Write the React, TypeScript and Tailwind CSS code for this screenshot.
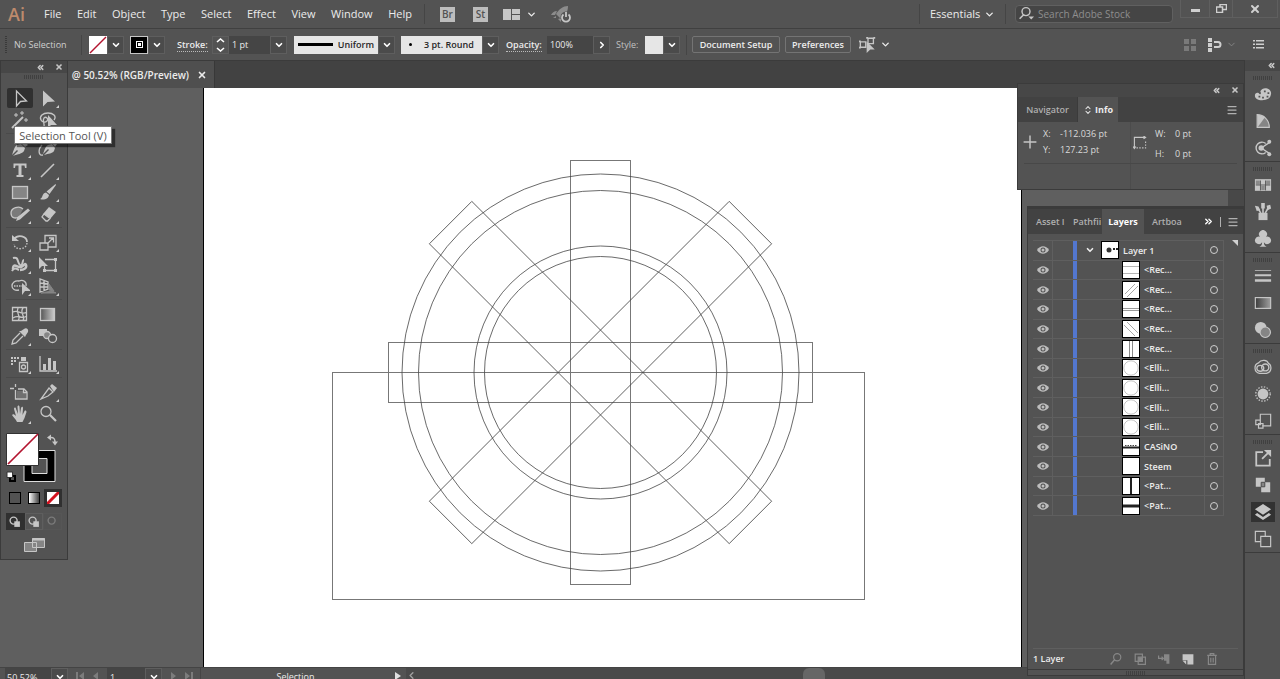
import type { ReactNode } from "react";
import { ChevronDown, ChevronRight, ChevronsLeft, ChevronsRight, ChevronsUpDown, Menu, X } from "lucide-react";

const menus = ["File", "Edit", "Object", "Type", "Select", "Effect", "View", "Window", "Help"];

type IconProps = { children: ReactNode; size?: string };

// 20x20 drawing grid shared by the tools and the dock
const Icon = ({ children, size = "size-5" }: IconProps) => (
  <svg
    viewBox="0 0 20 20"
    className={`${size} shrink-0 text-[#c6c6c6]`}
    fill="none"
    stroke="currentColor"
    strokeWidth="1.3"
    aria-hidden="true"
  >
    {children}
  </svg>
);

type Tool = { name: string; flyout?: boolean; art: ReactNode };

const solid = { fill: "currentColor", stroke: "none" };

const toolGroups: Tool[][] = [
  [
    { name: "Selection", art: <path d="M6.500 3v15l4-4.500 6-.500z" /> },
    { name: "Direct Selection", flyout: true, art: <path d="M5 2.500v16l4.500-4.500 7.500-.500z" {...solid} /> },
    {
      name: "Magic Wand",
      art: (
        <>
          <path d="M2 18 13 7" strokeWidth="2" />
          <path d="M6 3v4M4 5h4M12 1v4M10 3h4M16 8v4M14 10h4" strokeWidth="1" />
        </>
      ),
    },
    {
      name: "Lasso",
      art: (
        <>
          <path d="M16 10c3-4-1-7-6-7S1 6 3 10c1 2 4 3 6 1s-1-5-3-3 1 6 0 9" />
          <path d="M10 5v13l3-3h6z" {...solid} />
        </>
      ),
    },
  ],
  [
    {
      name: "Pen",
      flyout: true,
      art: <path fillRule="evenodd" d="M2 17c2-5 2-8 5-10l4-1 4 4-1 3c-2 3-6 3-11 5l5-5-1-1zM11 5l2-3 5 5-3 2z" {...solid} />,
    },
    {
      name: "Curvature",
      art: (
        <>
          <path d="M5 16c2-5 2-7 5-9l4-1 3 4-1 3c-2 3-5 2-10 4l5-5-1-1zM14 5l1-3 4 4-2 3z" {...solid} />
          <path d="M4 7c-4 4-4 11 1 10" />
        </>
      ),
    },
    {
      name: "Type",
      flyout: true,
      art: <path d="M3.500 3.500h13v4.500H15l-.500-2.500h-3V15h2v2h-7v-2h2V5.500h-3L5 8H3.500z" {...solid} />,
    },
    { name: "Line Segment", flyout: true, art: <path d="M3 17 16 4" strokeWidth="1.6" /> },
    {
      name: "Rectangle",
      flyout: true,
      art: <rect x="2.500" y="4.500" width="15" height="12" fill="#858585" />,
    },
    {
      name: "Paintbrush",
      flyout: true,
      art: <path d="M17.500 2 18 3l-6.500 9-3-2.500zM8 10.500l3 2.500c-1 5-6 5-9 4 3-1 2-6 6-6.500z" {...solid} />,
    },
    {
      name: "Shaper",
      flyout: true,
      art: (
        <>
          <path d="M13 5C9 1 1 4 1 9s4 6 8 4" fill="#7a7a7a" />
          <path d="m6 17 1.500-4L18 4.500l2 2-10 9z" {...solid} />
        </>
      ),
    },
    {
      name: "Eraser",
      flyout: true,
      art: (
        <>
          <path d="m11 3 7 5-5.500 6.500-7-5z" {...solid} />
          <path d="m6 10 6 4.500-2.500 2.500H8l-4-4z" />
        </>
      ),
    },
  ],
  [
    {
      name: "Rotate",
      flyout: true,
      art: (
        <>
          <path d="M4 7c4-5 13-3 13 3" strokeWidth="1.800" />
          <path d="M2 3v6h7z" {...solid} />
          <path d="M17 11c-1 8-13 7-13 1" strokeDasharray="1.500 1.500" />
        </>
      ),
    },
    {
      name: "Scale",
      flyout: true,
      art: <path d="M7 11V3.500h11V15h-8M2 11h8v7H2zM9 12l6-6M11 6h4.500v4.500" />,
    },
    {
      name: "Width",
      flyout: true,
      art: (
        <>
          <path d="M3 15c0-7 5-1 8-2s4-5 5-2-2 5-6 5" strokeWidth="2.500" />
          <path d="M3 4c6-2 4 5 7 7s2-5 4-5M2 17c2-4 5-2 7-1" strokeWidth="2" />
        </>
      ),
    },
    {
      name: "Free Transform",
      art: (
        <>
          <path d="M7 5.500h10.500v11h-11V12" />
          <path d="M1 3v12l3-3h6zM16 4h3v3h-3zM16 15h3v3h-3zM5 15h3v3H5z" {...solid} />
        </>
      ),
    },
    {
      name: "Shape Builder",
      flyout: true,
      art: (
        <>
          <path d="M9 14C5 15 2 13 2 10s3-6 7-5c4-2 8 1 7 5" />
          <path d="M4 10h8" strokeDasharray="1.500 1" />
          <path d="M12 7v12l3-4h6z" {...solid} />
        </>
      ),
    },
    {
      name: "Perspective Grid",
      flyout: true,
      art: (
        <>
          <path d="M2 3v13l8-3V6zM6 4v11M2 7l8 1M2 11h8" />
          <path d="M11 8v6l5 1zM3 17h15l-4-2z" fill="#858585" stroke="#858585" strokeWidth="1" />
        </>
      ),
    },
  ],
  [
    {
      name: "Mesh",
      art: <path d="M2.500 3.500h14v13h-14zM3 8c5-3 8 4 14 0M3 14c6-4 8 2 14-2M8 4c-3 6 4 7 0 13M13 4c-4 5 3 8 0 13" />,
    },
    {
      name: "Gradient",
      art: (
        <>
          <defs>
            <linearGradient id="toolGradient">
              <stop offset="0" stopColor="#555" />
              <stop offset="1" stopColor="#ccc" />
            </linearGradient>
          </defs>
          <rect x="2.500" y="4.500" width="14" height="12" fill="url(#toolGradient)" />
        </>
      ),
    },
    {
      name: "Eyedropper",
      flyout: true,
      art: (
        <>
          <path d="m10 7-7 7-1 4 4-1 7-7" />
          <path d="m9 5 6 6 1-2 2-3c1-3-2-5-4-3l-3 2z" {...solid} />
        </>
      ),
    },
    {
      name: "Blend",
      art: (
        <>
          <path d="M1 3h8v7H1z" {...solid} />
          <circle cx="9" cy="9" r="3.500" fill="#858585" />
          <circle cx="14.500" cy="12.500" r="4" fill="#535353" />
        </>
      ),
    },
  ],
  [
    {
      name: "Symbol Sprayer",
      flyout: true,
      art: (
        <>
          <path d="M9.500 8.500h8v9h-8z" />
          <circle cx="13.500" cy="13" r="2" />
          <path d="M11 3h5v4h-5zM1 3h2v2H1zM4 3h2v2H4zM7 3h2v2H7zM1 6h2v2H1zM4 6h2v2H4zM1 9h2v2H1z" {...solid} />
        </>
      ),
    },
    {
      name: "Column Graph",
      flyout: true,
      art: (
        <>
          <path d="M2 2v15h17" />
          <path d="M5 10h3v6H5zM10 4h3v12h-3zM15 7h3v9h-3z" {...solid} />
        </>
      ),
    },
  ],
  [
    {
      name: "Artboard",
      art: (
        <>
          <path d="M5.500 2v3M5.500 8v9H17v-7l-3-3H8M0 6.500h4" />
          <path d="M7 9h6v2h3v5H7z" fill="#707070" stroke="none" />
          <path d="M13.500 7v3.500H17" />
        </>
      ),
    },
    {
      name: "Slice",
      flyout: true,
      art: (
        <>
          <path d="m11 6 4 4-5 4-7 3z" />
          <path d="m12 4 2-2 5 4-3 4z" {...solid} />
        </>
      ),
    },
    {
      name: "Hand",
      flyout: true,
      art: (
        <path
          d="M7 18c-1-3-4-5-5-7 1-1 2-1 4 1L4 5c0-2 2-2 2 0l2 5-.500-7c0-2 2-2 2 0l.500 7 1-6c1-2 2-1 2 0l-.500 7 2-4c1-1 2 0 2 1l-2 6-2 4z"
          {...solid}
        />
      ),
    },
    {
      name: "Zoom",
      art: (
        <>
          <circle cx="8" cy="7.500" r="5" />
          <path d="m12 11 6 6" strokeWidth="2.200" />
        </>
      ),
    },
  ],
];

const dockGroups: Tool[][] = [
  [
    {
      name: "Color",
      art: (
        <path
          fillRule="evenodd"
          d="M1 12c0-4 4-4 5-2 2 1 2-1 1-3 3-6 12-3 12 2 0 6-5 8-10 8S1 15 1 12zm10-6v2h2V6zm4 2v2h2V8zm-1 4v2h2v-2zm-5 1v2h2v-2zm-4-1v2h2v-2z"
          {...solid}
        />
      ),
    },
    {
      name: "Color Guide",
      art: (
        <>
          <path d="M3.500 3v14H17C17 9 11 3 3.500 3z" fill="#858585" />
          <path d="M4 3v14L12 6C9 4 7 3 4 3z" {...solid} />
        </>
      ),
    },
    {
      name: "Color Themes",
      art: (
        <>
          <path d="M13 5a6.500 6.500 0 1 0 0 10M8 10l9-6M8 10l9 6" strokeWidth="1.600" />
          <circle cx="8" cy="10" r="3" {...solid} />
          <circle cx="17" cy="3" r="2.200" {...solid} />
          <circle cx="17" cy="17" r="2.200" {...solid} />
        </>
      ),
    },
  ],
  [
    {
      name: "Swatches",
      art: (
        <>
          <path d="M1 3.500h18v13H1z" {...solid} />
          <path d="M2 5h4.500v4.500H2zM13.500 5H18v4.500h-4.500zM8 11h4v4.500H8z" fill="#8a8a8a" stroke="none" />
          <path d="M2 10h16M7.200 5v11M12.800 5v11" stroke="#535353" strokeWidth="1" />
        </>
      ),
    },
    {
      name: "Brushes",
      art: (
        <>
          <path d="M5 11h10v8H5z" {...solid} />
          <path d="M8 12 4.500 6M10 11V4M12 12l4-7" strokeWidth="1.800" />
          <path d="M1 3l4 1 2 4-4 1zM8 0h4v6H8zM14 3l4-1 1 4-4 2z" {...solid} />
        </>
      ),
    },
    {
      name: "Symbols",
      art: (
        <path
          d="M6.500 7.500a4.500 4.500 0 1 1 7 0 4.200 4.200 0 1 1-2.500 6c0 3 1 4 3 5H6c2-1 3-2 3-5a4.200 4.200 0 1 1-2.500-6z"
          {...solid}
        />
      ),
    },
  ],
  [
    { name: "Stroke", art: <path d="M1 3.500h18v1H1zM1 8h18v2.200H1zM1 13.500h18v3H1z" {...solid} /> },
    {
      name: "Gradient Panel",
      art: (
        <>
          <defs>
            <linearGradient id="dockGradient">
              <stop offset="0" stopColor="#3c3c3c" />
              <stop offset="1" stopColor="#a0a0a0" />
            </linearGradient>
          </defs>
          <rect x="1.500" y="4" width="17" height="12" fill="url(#dockGradient)" />
        </>
      ),
    },
    {
      name: "Transparency",
      art: (
        <>
          <circle cx="7.500" cy="7.500" r="6.500" {...solid} />
          <circle cx="12.500" cy="12.500" r="5.800" fill="#858585" />
        </>
      ),
    },
  ],
  [
    {
      name: "Libraries",
      art: (
        <>
          <path d="M6 17a6 6 0 0 1-1-11.500C8 1 15 2 16 6c4 2 4 10-2 11z" strokeWidth="1.400" />
          <ellipse cx="7" cy="11.500" rx="3.800" ry="3.300" strokeWidth="1.600" />
          <ellipse cx="12.500" cy="10.500" rx="4" ry="3.800" strokeWidth="1.600" />
        </>
      ),
    },
    {
      name: "Appearance",
      art: (
        <>
          <circle cx="10" cy="10" r="6" {...solid} />
          <circle cx="10" cy="10" r="8" strokeDasharray="1.600 1.600" strokeWidth="1.500" />
        </>
      ),
    },
    {
      name: "Graphic Styles",
      art: <path d="M7 9V2.500h11.500v13H9M2 9h5v5H2zM5 13h5v5H5z" />,
    },
  ],
  [
    {
      name: "Asset Export",
      art: (
        <>
          <path d="M10 3.500H2.500v15h15V11M9 11l7-7" strokeWidth="2" />
          <path d="M11 1h8v8z" {...solid} />
        </>
      ),
    },
    {
      name: "Pathfinder",
      art: (
        <>
          <path d="M2 2h10v5h6v11H8v-6H2z" {...solid} />
          <path d="M8 7h4v5H8z" fill="#858585" stroke="#444" strokeWidth="1" />
        </>
      ),
    },
    {
      name: "Layers",
      art: (
        <path d="m10 1 9 6-9 6-9-6zM3.500 11l6.500 4.500 6.500-4.500L19 13l-9 6-9-6z" {...solid} />
      ),
    },
    { name: "Artboards", art: <path d="M7 13H1.500V1.500h11V7M7.500 7h11v11.500h-11z" /> },
  ],
];

type Layer = { name: string; art: ReactNode };

const ellipse = <circle cx="8" cy="8" r="7.200" stroke="#c4c4c4" />;
const layers: Layer[] = [
  { name: "<Rec...", art: <path d="M0 4.500h16M0 11.500h16" stroke="#b5b5b5" /> },
  { name: "<Rec...", art: <path d="M2 12 12 2M4 15 15 4" stroke="#a8a8a8" /> },
  { name: "<Rec...", art: <path d="M0 7.500h16M0 9.500h16" stroke="#9a9a9a" /> },
  { name: "<Rec...", art: <path d="M1 4l11 11M4 1l11 11" stroke="#a8a8a8" /> },
  { name: "<Rec...", art: <path d="M6.500 0v16M9.500 0v16" stroke="#8a8a8a" /> },
  { name: "<Elli...", art: ellipse },
  { name: "<Elli...", art: ellipse },
  { name: "<Elli...", art: ellipse },
  { name: "<Elli...", art: ellipse },
  {
    name: "CASiNO",
    art: (
      <>
        <path d="M0 8.500h16" stroke="#222" strokeWidth="2" />
        <path d="M2 6.500h12" stroke="#444" strokeDasharray="1.500 1" />
      </>
    ),
  },
  { name: "Steem", art: null },
  { name: "<Pat...", art: <path d="M8 0v16" stroke="#222" strokeWidth="2" /> },
  { name: "<Pat...", art: <path d="M0 8h16" stroke="#222" strokeWidth="3" /> },
];

const Gripper = () => (
  <span className="block h-1 w-5 bg-[repeating-linear-gradient(90deg,#404040_0_1px,transparent_1px_2px)]" />
);

const Arrow = ({ label, right = false }: { label: string; right?: boolean }) => (
  <button
    aria-label={label}
    className="flex h-[18px] w-[17px] shrink-0 items-center justify-center border border-[#5e5e5e] bg-[#4b4b4b] text-white"
  >
    {right ? <ChevronRight size={10} strokeWidth={4} /> : <ChevronDown size={10} strokeWidth={4} />}
  </button>
);

const Divider = () => <span className="h-5 w-px shrink-0 bg-[#454545]" />;

const MenuBar = () => (
  <header className="flex h-7 shrink-0 items-center text-[11px]">
    <span className="w-[44px] pl-2 text-[18px] leading-none font-semibold text-[#bd8a6c]">Ai</span>
    <nav className="flex w-[368px] justify-between">
      {menus.map((menu) => (
        <button key={menu}>{menu}</button>
      ))}
    </nav>
    <div className="ml-3 flex items-center">
      <Divider />
      <button className="ml-[15px] size-[15px] bg-[#bdbdbd] text-[10px] leading-none font-semibold text-[#535353]">Br</button>
      <button className="ml-[18px] size-[15px] bg-[#bdbdbd] text-[10px] leading-none font-semibold text-[#535353]">St</button>
      <button aria-label="Arrange documents" className="ml-[15px] flex items-center gap-1.5">
        <svg viewBox="0 0 17 11" className="h-[11px] w-[17px]" fill="#c6c6c6">
          <path d="M0 0h8v11H0zM9 0h8v5H9zM9 6h8v5H9z" />
        </svg>
        <ChevronDown size={11} strokeWidth={3} />
      </button>
      <button aria-label="GPU performance" className="ml-3.5">
        <svg viewBox="0 0 22 18" className="h-[18px] w-[22px]" fill="#8c8c8c">
          <path d="M17 1c-5 0-9 3-12 8l5 5c4-2 7-7 7-13zM6 6C3 6 1 8 0 10h4zM7 14l3-1v4zM2 13l3-2v2z" />
          <circle cx="15" cy="12" r="5.500" fill="#535353" />
          <path d="M12.500 9.500a4 4 0 1 0 5 0M15 7v5" fill="none" stroke="#c6c6c6" strokeWidth="1.800" />
        </svg>
      </button>
    </div>
    <div className="ml-auto flex h-full items-center">
      <Divider />
      <label className="ml-2.5 flex items-center">
        <select aria-label="Workspace" className="w-[54px] appearance-none outline-none">
          <option>Essentials</option>
        </select>
        <ChevronDown size={11} strokeWidth={3} />
      </label>
      <span className="ml-2.5" />
      <Divider />
      <label className="ml-[9px] flex h-[18px] w-[158px] items-center rounded-sm border border-[#606060] bg-[#454545] px-0.5">
        <Icon size="size-4">
          <circle cx="10" cy="7" r="5" strokeWidth="1.800" />
          <path d="m7 11-5 5" strokeWidth="2" />
          <path d="M13 13h7l-3.500 4z" {...solid} />
        </Icon>
        <input
          aria-label="Search Adobe Stock"
          placeholder="Search Adobe Stock"
          className="ml-1 w-full min-w-0 text-[10px] outline-none placeholder:text-[#8e8e8e]"
        />
      </label>
      <div className="mr-0.5 ml-[7px] flex h-[18px] self-start border border-t-0 border-[#5f5f5f]">
        <button aria-label="Minimize" className="flex w-7 items-center justify-center pt-1">
          <span className="h-[3px] w-[9px] bg-[#cfcfcf]" />
        </button>
        <button aria-label="Restore" className="flex w-6 items-center justify-center border-x border-[#5f5f5f]">
          <svg viewBox="0 0 11 9" className="h-[9px] w-[11px]" fill="none" stroke="#cfcfcf">
            <path d="M4 3V.500h6.500v5H7M.500 3h6v5.500h-6z" strokeWidth="1.500" />
          </svg>
        </button>
        <button aria-label="Close" className="flex w-11 items-center justify-center text-[#d0d0d0]">
          <X size={12} strokeWidth={4} />
        </button>
      </div>
    </div>
  </header>
);

const ControlBar = () => (
  <div className="flex h-8 shrink-0 items-center border-t border-[#404040] text-[9px] font-medium whitespace-nowrap">
    <span className="ml-[5px] h-[18px] w-0.5 bg-[repeating-linear-gradient(#3a3a3a_0_1px,transparent_1px_2px)]" />
    <span className="ml-[7px] w-[67px] text-[#cfcfcf]">No Selection</span>
    <Divider />
    <button aria-label="Fill" className="ml-[7px] size-[18px] bg-white">
      <svg viewBox="0 0 18 18" stroke="#b3142f" strokeWidth="1.500">
        <path d="M1 17 17 1" />
      </svg>
    </button>
    <Arrow label="Fill options" />
    <button aria-label="Stroke color" className="ml-1.5 flex size-[18px] items-center justify-center border border-[#c6c6c6] bg-black">
      <span className="flex size-[7px] items-center justify-center border border-white bg-black">
        <span className="size-[3px] bg-white" />
      </span>
    </button>
    <Arrow label="Stroke color options" />
    <label htmlFor="strokeWeight" className="ml-3 w-[35px] font-semibold">
      <span className="border-b border-dotted border-[#bbb]">Stroke:</span>
    </label>
    <button aria-label="Step stroke weight" className="flex h-[18px] w-[17px] items-center justify-center border border-[#5e5e5e]">
      <svg viewBox="0 0 9 14" className="h-3.5 w-[9px]" fill="none" stroke="#fff" strokeWidth="1.600">
        <path d="m1 4 3.500-3L8 4M1 10l3.500 3L8 10" />
      </svg>
    </button>
    <input id="strokeWeight" defaultValue="1 pt" className="h-[18px] w-[41px] bg-[#454545] px-[3px] outline-none" />
    <Arrow label="Stroke weight presets" />
    <button className="ml-[7px] flex h-[18px] w-[84px] items-center gap-[5px] bg-[#e6e6e6] px-1 font-semibold text-[#262626]">
      <span className="h-[3px] w-[37px] bg-black" />
      Uniform
    </button>
    <Arrow label="Width profile" />
    <button className="ml-[6px] flex h-[18px] w-[81px] items-center gap-3 bg-[#e6e6e6] px-2 font-semibold text-[#262626]">
      <span className="size-[3px] rounded-full bg-black" />
      3 pt. Round
    </button>
    <Arrow label="Brush definition" />
    <label htmlFor="opacity" className="ml-[7px] w-[41px] font-semibold">
      <span className="border-b border-dotted border-[#bbb]">Opacity:</span>
    </label>
    <input id="opacity" defaultValue="100%" className="h-[18px] w-[46px] bg-[#454545] px-[3px] outline-none" />
    <Arrow label="Opacity slider" right />
    <span className="ml-[6px] w-[29px] text-[#c2c2c2]">Style:</span>
    <button aria-label="Graphic style" className="size-[18px] bg-[#e6e6e6]" />
    <Arrow label="Graphic style options" />
    <span className="ml-1.5" />
    <Divider />
    <button className="ml-[5px] h-[17px] w-[88px] rounded-xs border border-[#747474] leading-none font-semibold">Document Setup</button>
    <button className="ml-[5px] h-[17px] w-[66px] rounded-xs border border-[#747474] leading-none font-semibold">Preferences</button>
    <button aria-label="Select similar objects" className="ml-2 flex items-center gap-[3px]">
      <Icon size="size-[18px]">
        <path d="M1.500 6.500h6v6h-6zM10 2.500h6v6h-6z" strokeWidth="1.500" />
        <path d="M0 5h2v2H0zM8 1h2v2H8zM16 1h2v2h-2zM0 12h2v2H0z" {...solid} />
        <path d="M8.500 6v13l4-4h5z" {...solid} />
      </Icon>
      <ChevronDown size={11} strokeWidth={3} />
    </button>
    <div className="mr-4 ml-auto flex items-center">
      <button aria-label="Align to pixel grid">
        <svg viewBox="0 0 12 12" className="size-3" fill="#7a7a7a">
          <path d="M0 0h5v5H0zM7 0h5v5H7zM0 7h5v5H0zM7 7h5v5H7z" />
        </svg>
      </button>
      <button aria-label="Snap options" className="ml-3 flex items-center gap-1">
        <svg viewBox="0 0 14 14" className="size-3.5" fill="#cfcfcf">
          <path d="M0 0h4v4H0zM0 5h4v4H0zM0 10h4v4H0z" />
          <path d="M6 4h4a2.500 2.500 0 0 1 0 5H6" fill="none" stroke="#cfcfcf" strokeWidth="2" />
        </svg>
        <ChevronDown size={11} strokeWidth={2} className="text-[#858585]" />
      </button>
      <button aria-label="Control bar menu" className="ml-4">
        <svg viewBox="0 0 11 9" className="h-[9px] w-[11px]" fill="#cfcfcf">
          <path d="M0 0h2v1.500H0zM3 0h8v1.500H3zM0 3.500h2V5H0zM3 3.500h8V5H3zM0 7h2v1.500H0zM3 7h8v1.500H3z" />
        </svg>
      </button>
    </div>
  </div>
);

// pair of solid triangles used to collapse a panel
const Collapse = ({ label }: { label: string }) => (
  <button aria-label={label}>
    <ChevronsLeft size={9} strokeWidth={4} className="text-[#c6c6c6]" />
  </button>
);

const WindowBar = () => (
  <div className="flex h-3 shrink-0 items-center justify-end gap-2.5 bg-[#474747] px-1 text-[#c6c6c6]">
    <Collapse label="Collapse panel" />
    <button aria-label="Close panel"><X size={8} strokeWidth={5} /></button>
  </div>
);

const Toolbox = () => (
  <aside className="absolute top-0 left-0 z-10 w-[68px] border border-[#3b3b3b] bg-[#535353] pb-1.5">
    <WindowBar />
    <div className="flex h-3.5 items-start justify-center pt-0.5"><Gripper /></div>
    {toolGroups.map((group, g) => (
      <div key={g} className={g ? "mx-[5px] mt-0.5 border-t border-[#4a4a4a] pt-[3px]" : "mx-[5px]"}>
        <div className="grid grid-cols-2">
          {group.map((tool, i) => (
            <button
              key={tool.name}
              aria-label={tool.name}
              className={
                g === 0 && i === 0
                  ? "relative mx-px my-px flex h-5 items-center justify-center rounded-xs bg-[#303030]"
                  : "relative mx-px my-px flex h-5 items-center justify-center"
              }
            >
              <Icon>{tool.art}</Icon>
              {tool.flyout && (
                <span className="absolute right-0.5 bottom-0 border-b-3 border-l-3 border-b-[#d0d0d0] border-l-transparent" />
              )}
            </button>
          ))}
        </div>
      </div>
    ))}
    <div className="flex justify-center pt-[7px]">
      <svg viewBox="1 0 56 52" className="h-[52px] w-14" role="img" aria-label="Fill and stroke">
        <path d="M19 18.500h31v31H19z" fill="#000" stroke="#ddd" />
        <path d="M27 26.500h15v15H27z" fill="#535353" stroke="#ddd" />
        <path d="M1.500 1.500h32v32h-32z" fill="#fff" stroke="#333" />
        <path d="m3 32 30-30" stroke="#b3142f" strokeWidth="1.700" />
        <path d="M46 5.500c3 0 4 1 4 5" fill="none" stroke="#c6c6c6" strokeWidth="1.500" />
        <path d="m42 5.500 4-3v6zM47 9.500h6l-3 4z" fill="#c6c6c6" />
        <path d="M5 44h5v5H5z" fill="none" stroke="#000" strokeWidth="2" />
        <path d="M2 40h5.500v5.500H2z" fill="#fff" stroke="#333" />
      </svg>
    </div>
    <div className="mx-[5px] mt-[5px] grid grid-cols-3 justify-items-center">
      <button aria-label="Color" className="my-[3px] size-3 border border-black bg-[#535353]" />
      <button aria-label="Gradient" className="my-[3px] size-3 border border-black bg-linear-to-r from-white to-[#444]" />
      <button aria-label="None" className="flex size-[18px] items-center justify-center bg-[#303030]">
        <svg viewBox="0 0 12 12" className="size-3 bg-white" stroke="#d3121f" strokeWidth="3">
          <path d="M0 12 12 0" />
        </svg>
      </button>
    </div>
    <div className="mx-[5px] mt-1.5 grid grid-cols-3">
      {["Draw Normal", "Draw Behind", "Draw Inside"].map((mode, i) => (
        <button
          key={mode}
          aria-label={mode}
          className={
            i === 0
              ? "flex h-[17px] items-center justify-center bg-[#303030]"
              : i === 1
                ? "flex h-[17px] items-center justify-center border border-[#5e5e5e]"
                : "flex h-[17px] items-center justify-center border border-[#5e5e5e] opacity-35"
          }
        >
          <Icon size="size-3.5">
            <circle cx="8" cy="8" r="5" strokeWidth="2" />
            {i < 2 && <path d="M9 9h8v8H9z" {...solid} />}
          </Icon>
        </button>
      ))}
    </div>
    <button aria-label="Change screen mode" className="mx-auto mt-[7px] block">
      <svg viewBox="0 0 21 16" className="h-4 w-[21px]" fill="#858585" stroke="#c6c6c6">
        <path d="M.500 5.500h12v9H.500zM8.500 1.500h12v9h-12z" />
        <path d="M8 2.500h13" strokeWidth="2" />
      </svg>
    </button>
  </aside>
);

const Artwork = () => (
  <svg viewBox="204 88 817 579" className="h-[579px] w-[817px]" fill="none" stroke="#777" role="img" aria-label="Artboard">
    <rect x="332.500" y="372.500" width="532" height="227" />
    <rect x="570.500" y="160.500" width="60" height="424" />
    <rect x="388.500" y="342.500" width="424" height="60" />
    <g stroke="#444" strokeWidth=".8">
      <rect x="388.500" y="342.500" width="424" height="60" transform="rotate(45 600.500 372.500)" />
      <rect x="388.500" y="342.500" width="424" height="60" transform="rotate(-45 600.500 372.500)" />
      {[198.500, 182, 126.500, 116].map((r) => (
        <circle key={r} cx="600.500" cy="372.500" r={r} />
      ))}
    </g>
  </svg>
);

const StepIcon = ({ d }: { d: string }) => (
  <svg viewBox="0 0 8 8" className="size-2" fill="#7c7c7c">
    <path d={d} />
  </svg>
);

const StatusBar = () => (
  <footer className="flex h-3 shrink-0 items-start overflow-hidden border-t border-[#444] text-[9px] font-medium">
    <input aria-label="Zoom level" defaultValue="50.52%" className="ml-[5px] h-[18px] w-[46px] bg-[#454545] px-0.5 outline-none" />
    <Arrow label="Zoom presets" />
    <div className="flex h-[16px] w-[39px] items-center justify-center gap-2">
      <button aria-label="First artboard"><StepIcon d="M0 0h2v8H0zM8 0v8L3 4z" /></button>
      <button aria-label="Previous artboard"><StepIcon d="M6 0v8L1 4z" /></button>
    </div>
    <input aria-label="Artboard number" defaultValue="1" className="h-[18px] w-[38px] bg-[#454545] px-[3px] outline-none" />
    <Arrow label="Artboard list" />
    <div className="flex h-[16px] w-[38px] items-center justify-center gap-2">
      <button aria-label="Next artboard"><StepIcon d="M2 0v8l5-4z" /></button>
      <button aria-label="Last artboard"><StepIcon d="M6 0h2v8H6zM0 0v8l5-4z" /></button>
    </div>
    <span className="flex h-[18px] w-[190px] items-center justify-center border-l border-[#454545]">Selection</span>
    <button aria-label="Status options" className="flex h-4 w-4 items-center justify-center">
      <svg viewBox="0 0 6 8" className="h-2 w-1.5" fill="#e0e0e0"><path d="M0 0v8l6-4z" /></svg>
    </button>
    <div className="flex h-[18px] flex-1 items-start bg-[#4a4a4a]">
      <ChevronDown size={11} strokeWidth={3} className="mt-0.5 rotate-90 text-[#a0a0a0]" />
      <span className="ml-auto h-[18px] w-[22px] rounded-md bg-[#666]" />
      <span className="w-1/2" />
    </div>
  </footer>
);

const Dock = () => (
  <aside className="w-9 shrink-0 border-l border-[#3b3b3b]">
    <div className="flex h-[11px] items-center justify-end bg-[#474747] pr-1">
      <Collapse label="Expand panels" />
    </div>
    {dockGroups.map((group, g) => (
      <div key={g} className="border-b border-[#3b3b3b]">
        <div className="flex h-[9px] items-end justify-center"><Gripper /></div>
        {group.map((panel) => (
          <button
            key={panel.name}
            aria-label={panel.name}
            className="flex h-[27px] w-full items-center justify-center"
          >
            <span
              className={
                panel.name === "Layers"
                  ? "flex h-5 w-6 items-center justify-center bg-[#323232]"
                  : "flex h-5 w-6 items-center justify-center"
              }
            >
              <Icon size="size-[18px]">{panel.art}</Icon>
            </span>
          </button>
        ))}
      </div>
    ))}
  </aside>
);

const InfoPanel = () => (
  <section className="absolute top-[23px] right-9 w-[227px] border border-[#3b3b3b] bg-[#535353] text-[9px] font-medium">
    <div className="h-[13px] bg-[#474747]">
      <WindowBar />
    </div>
    <div className="flex h-[25px] items-stretch bg-[#424242]">
      <button className="w-[60px] border-r border-[#3b3b3b] font-semibold text-[#b0b0b0]">Navigator</button>
      <button className="flex w-10 items-center justify-center gap-0.5 bg-[#535353] font-bold">
        <ChevronsUpDown size={10} strokeWidth={2.5} />
        Info
      </button>
      <button aria-label="Info menu" className="mr-[5px] ml-auto"><Menu size={12} strokeWidth={2.5} className="text-[#b0b0b0]" /></button>
    </div>
    <div className="flex h-[41px] text-[#dadada]">
      <div className="flex w-[113px] items-start gap-[5px] border-r border-[#4c4c4c] pl-1">
        <span className="pt-3"><Icon size="size-4"><path d="M10 2v16M2 10h16" strokeWidth="1.800" /></Icon></span>
        <dl className="grid grid-cols-[17px_auto] pt-1 leading-4">
          <dt>X:</dt><dd>-112.036 pt</dd>
          <dt>Y:</dt><dd>127.23 pt</dd>
        </dl>
      </div>
      <div className="flex items-start gap-2 pl-0.5">
        <span className="pt-3.5">
          <Icon size="size-3.5">
            <path d="M2 18V2h15M0 15l2 3 2-3M15 0l3 2-3 2" strokeWidth="1.600" />
            <path d="M5 17h13V6" strokeDasharray="2 2" strokeWidth="1.600" />
          </Icon>
        </span>
        <dl className="grid grid-cols-[20px_auto] pt-0.5 leading-5">
          <dt>W:</dt><dd>0 pt</dd>
          <dt>H:</dt><dd>0 pt</dd>
        </dl>
      </div>
    </div>
    <div className="mx-1.5 h-[26px] border-t border-[#484848]">
      <div className="h-full w-[107px] border-r border-[#4c4c4c]" />
    </div>
  </section>
);

const Eye = () => (
  <svg viewBox="0 0 12 8" className="h-2 w-3" fill="#bdbdbd">
    <path d="M0 4c3-5 9-5 12 0-3 5-9 5-12 0z" />
    <circle cx="6" cy="4" r="2.500" fill="#535353" />
    <circle cx="6" cy="4" r="1.500" />
  </svg>
);

const LayerRow = ({ name, art, parent = false }: Layer & { parent?: boolean }) => (
  <li className="flex flex-1 items-stretch border-b border-[#5f5f5f]">
    <button aria-label={`Toggle ${name}`} className="flex w-5 items-center justify-center border-r border-[#5f5f5f]"><Eye /></button>
    <span className="w-5" />
    <span className="w-1 bg-[#5377cf]" />
    <span className={parent ? "flex w-[25px] items-center justify-center" : "w-[46px]"}>
      {parent && <ChevronDown size={10} strokeWidth={4} />}
    </span>
    <svg viewBox="0 0 16 16" className="size-4 self-center bg-white outline outline-black" fill="none">{art}</svg>
    <span className="min-w-0 flex-1 self-center pl-[5px] whitespace-nowrap">{name}</span>
    <button aria-label={`Target ${name}`} className="flex w-5 items-center justify-center border-x border-[#5f5f5f]">
      <span className="size-2 rounded-full border border-[#cfcfcf]" />
    </button>
  </li>
);

const LayersPanel = () => (
  <section className="absolute top-[146px] right-9 flex w-[217px] flex-col border border-t-3 border-[#3b3b3b] bg-[#535353] text-[9px] font-semibold">
    <div className="flex h-[25px] items-stretch bg-[#424242] whitespace-nowrap text-[#b0b0b0]">
      <button className="ml-2 w-7 text-left">Asset I</button>
      <button className="ml-[9px] w-[29px] text-left">Pathfii</button>
      <button className="w-[42px] bg-[#535353] font-bold text-white">Layers</button>
      <button className="ml-2 w-8 text-left">Artboa</button>
      <button aria-label="More panels" className="ml-auto text-white"><ChevronsRight size={11} strokeWidth={3} /></button>
      <span className="mx-1.5 h-2.5 w-px self-center bg-[#b0b0b0]" />
      <button aria-label="Layers menu" className="mr-1"><Menu size={12} strokeWidth={2.5} /></button>
    </div>
    <div className="mx-[5px] mt-1.5 flex h-[409px] justify-between border-b border-[#5f5f5f]">
      <ul className="flex h-[276px] w-[191px] flex-col border-t border-[#5f5f5f] text-[9px]">
        <LayerRow
          parent
          name="Layer 1"
          art={
            <>
              <circle cx="7" cy="8" r="2.500" fill="#333" />
              <path d="M11 7h2M14 7h2" stroke="#222" strokeWidth="2" />
            </>
          }
        />
        {layers.map((layer, i) => (
          <LayerRow key={i} {...layer} />
        ))}
      </ul>
      <span className="self-start border-t-6 border-l-6 border-t-[#d0d0d0] border-l-transparent" />
    </div>
    <div className="flex h-5 items-center pr-[25px] pl-[5px]">
      <span className="flex-1">1 Layer</span>
      <div className="flex gap-3">
        <button aria-label="Locate object" className="opacity-45"><Icon size="size-3"><circle cx="12" cy="7" r="6" strokeWidth="2" /><path d="m8 11-7 8" strokeWidth="2.500" /></Icon></button>
        <button aria-label="Make clipping mask" className="opacity-45"><Icon size="size-3"><path d="M2 2h12v12H2zM7 7h12v12H7z" strokeWidth="2" /><path d="M7 7h7v7H7z" {...solid} /></Icon></button>
        <button aria-label="Create sublayer" className="opacity-45"><Icon size="size-3"><path d="M1 4v5h8M6 6l3 3-3 3" strokeWidth="2" /><path d="M10 2h9v16h-5v-5h-4z" {...solid} /></Icon></button>
        <button aria-label="Create layer"><Icon size="size-3"><path d="M1 2h18v17H9v-7H1zM1 13h6v6z" {...solid} /></Icon></button>
        <button aria-label="Delete" className="opacity-45"><Icon size="size-3"><path d="M2 4h16M7 4V1h6v3M4 5v14h12V5M8 8v8M12 8v8" strokeWidth="2" /></Icon></button>
      </div>
    </div>
    <div className="flex h-1.5 items-center justify-center border-t border-[#3b3b3b]"><Gripper /></div>
  </section>
);

const App = () => {
  return (
    <div className="flex h-screen flex-col overflow-hidden bg-[#535353] font-['Open_Sans','Noto_Sans',sans-serif] text-[#ececec]">
      <MenuBar />
      <ControlBar />
      <div className="relative flex min-h-0 flex-1">
        <main className="flex min-w-0 flex-1 flex-col">
          <div className="flex h-7 shrink-0 border-t border-[#3b3b3b] bg-[#424242]">
            <div className="flex w-[215px] items-center justify-end gap-2 border-r border-[#383838] bg-[#4f4f4f] pt-px pr-[7px] text-[10px] font-semibold whitespace-nowrap">
              <span>@ 50.52% (RGB/Preview)</span>
              <button aria-label="Close document"><X size={10} strokeWidth={4} /></button>
            </div>
          </div>
          <div className="flex min-h-0 flex-1 bg-[#5f5f5f] pl-[203px]">
            <div className="min-w-0 flex-1 overflow-hidden border-x border-black bg-white">
              <Artwork />
            </div>
            <div className="w-[206px] shrink-0" />
            <div className="w-4 shrink-0 bg-[#484848]" />
          </div>
          <StatusBar />
        </main>
        <Dock />
        <Toolbox />
        <InfoPanel />
        <LayersPanel />
        <div
          role="tooltip"
          className="absolute top-[66px] left-[14px] z-20 flex h-[18px] w-[98px] items-center justify-center border border-[#777] bg-white text-[11px] leading-none whitespace-nowrap text-[#555] shadow-[3px_3px_1px_rgba(0,0,0,0.5)]"
        >
          Selection Tool (V)
        </div>
      </div>
    </div>
  );
};

export default App;
